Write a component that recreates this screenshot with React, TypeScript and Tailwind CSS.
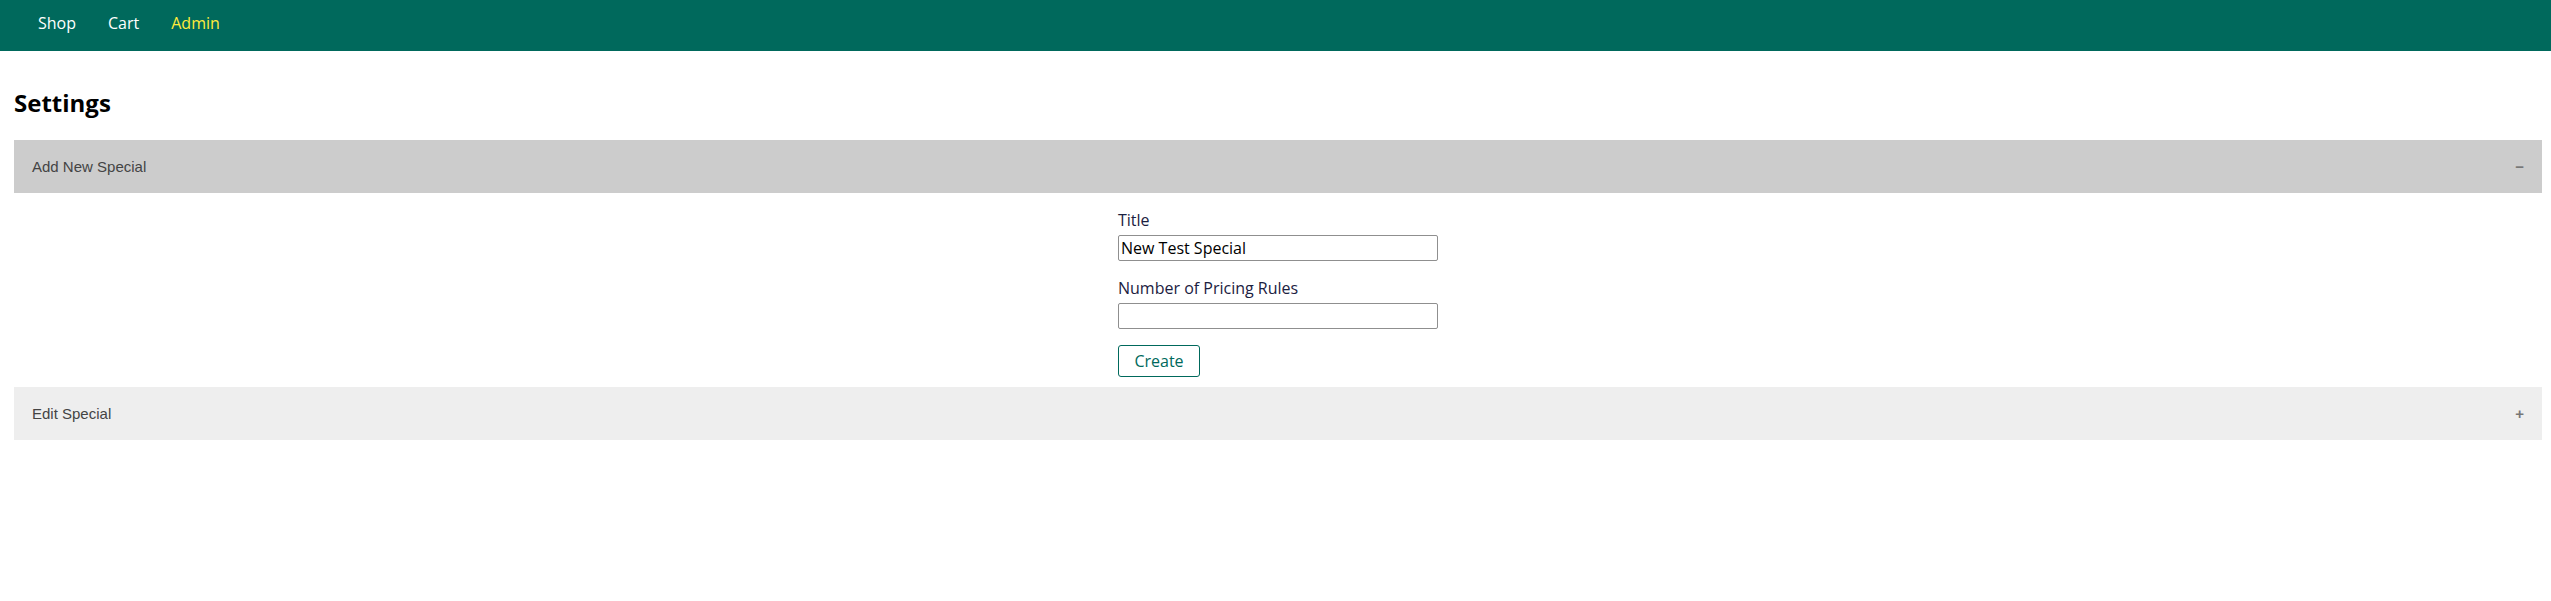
import { useState } from "react"

const navLinks = [
  { title: "Shop", active: false },
  { title: "Cart", active: false },
  { title: "Admin", active: true },
]

export default function App() {
  const [addOpen, setAddOpen] = useState(true)
  const [editOpen, setEditOpen] = useState(false)
  const [title, setTitle] = useState("New Test Special")
  const [rules, setRules] = useState("")

  return (
    <div className="min-h-[601px] bg-white font-['Open_Sans',sans-serif]">
      <nav className="h-[51px] bg-[#00695c] flex items-start pt-[11px] pl-[22px]">
        {navLinks.map((link) => (
          <a
            key={link.title}
            href="#"
            className={
              link.active
                ? "px-4 text-base leading-6 text-[#ffeb3b]"
                : "px-4 text-base leading-6 text-white"
            }
          >
            {link.title}
          </a>
        ))}
      </nav>

      <div className="pl-[14px] pr-[9px]">
        <h2 className="pt-[34px] mb-[19px] text-[24px] leading-[36px] font-bold text-black">Settings</h2>

        {/* Add New Special */}
        <button
          onClick={() => setAddOpen(!addOpen)}
          className={
            (addOpen ? "bg-[#cccccc]" : "bg-[#eeeeee]") +
            " w-full flex items-center justify-between p-[18px] text-left font-['Liberation_Sans',Arial,sans-serif] text-[15px] leading-[17px] text-[#444444]"
          }
        >
          <span>Add New Special</span>
          <span className="font-bold text-[#777777]">{addOpen ? "−" : "+"}</span>
        </button>
        {addOpen && (
          <div className="flex justify-center pt-[15px] pb-[10px]">
            <div className="w-[320px] flex flex-col">
              <label className="text-base leading-6 text-[#1b2141]">Title</label>
              <input
                value={title}
                onChange={(e) => setTitle(e.target.value)}
                className="mt-[3px] h-[26px] w-[320px] border border-[#8f8f8f] rounded-[2px] px-[2px] text-base text-black outline-none"
              />
              <label className="mt-[15px] text-base leading-6 text-[#1b2141]">Number of Pricing Rules</label>
              <input
                value={rules}
                onChange={(e) => setRules(e.target.value)}
                className="mt-[3px] h-[26px] w-[320px] border border-[#8f8f8f] rounded-[2px] px-[2px] text-base text-black outline-none"
              />
              <div className="mt-4">
                <button className="h-8 w-[82px] border border-[#00695c] rounded-[3px] bg-white text-base text-[#00695c]">
                  Create
                </button>
              </div>
            </div>
          </div>
        )}

        {/* Edit Special */}
        <button
          onClick={() => setEditOpen(!editOpen)}
          className={
            (editOpen ? "bg-[#cccccc]" : "bg-[#eeeeee]") +
            " w-full flex items-center justify-between p-[18px] text-left font-['Liberation_Sans',Arial,sans-serif] text-[15px] leading-[17px] text-[#444444]"
          }
        >
          <span>Edit Special</span>
          <span className="font-bold text-[#777777]">{editOpen ? "−" : "+"}</span>
        </button>
      </div>
    </div>
  )
}
